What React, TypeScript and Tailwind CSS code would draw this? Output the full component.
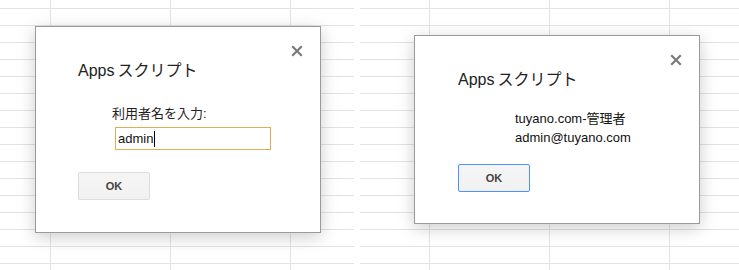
import React from "react";

const gridLeft =
  "bg-[linear-gradient(to_bottom,#e3e3e3_1px,transparent_1px),linear-gradient(to_right,#e3e3e3_1px,transparent_1px)] bg-[size:120px_17px,120px_17px] bg-[position:0px_8px,50px_0px]";
const gridRight =
  "bg-[linear-gradient(to_bottom,#e3e3e3_1px,transparent_1px),linear-gradient(to_right,#e3e3e3_1px,transparent_1px)] bg-[size:120px_17px,120px_17px] bg-[position:0px_8px,69px_0px]";

function CloseX() {
  return (
    <svg width="12" height="12" viewBox="0 0 12 12" className="block">
      <path d="M2 2 L10 10 M10 2 L2 10" stroke="#7a7a7a" strokeWidth="2.2" strokeLinecap="square" />
    </svg>
  );
}

function OkButton({ focused }: { focused?: boolean }) {
  return (
    <div
      className={
        "w-[72px] h-[28px] rounded-[2px] flex items-center justify-center text-[11px] font-bold text-[#444] bg-[linear-gradient(#f5f5f5,#f1f1f1)] border " +
        (focused ? "border-[#4d90fe]" : "border-[#dcdcdc]")
      }
    >
      OK
    </div>
  );
}

function Title() {
  return (
    <>
      Apps<span className="tracking-[-1.5px]"> </span>スクリプト
    </>
  );
}

export default function App() {
  const font = "font-['Liberation_Sans','Noto_Sans_CJK_JP',sans-serif]";
  return (
    <div className={"w-[739px] h-[270px] bg-white flex overflow-hidden " + font}>
      <div className={"relative w-[354px] h-[270px] shrink-0 " + gridLeft}>
        <div className="absolute left-[35px] top-[26px] w-[286px] h-[207px] bg-white border border-[#9a9a9a] shadow-[0_4px_16px_rgba(0,0,0,0.2)]">
          <div className="absolute right-[17px] top-[18px]">
            <CloseX />
          </div>
          <div className="pl-[42px] pt-[34px] text-[16px] leading-[20px] text-[#222]">
            <Title />
          </div>
          <div className="pl-[76px] pt-[25px] text-[13px] leading-[16px] text-[#222]">利用者名を入力:</div>
          <div className="pl-[79px] pt-[5px]">
            <div className="w-[156px] h-[23px] border border-[#dcae55] flex items-center pl-[2px] text-[13px] text-[#111]">
              admin<span className="inline-block w-[1px] h-[16px] bg-black ml-[1px]" />
            </div>
          </div>
          <div className="pl-[42px] pt-[22px]">
            <OkButton />
          </div>
        </div>
      </div>
      <div className="w-[6px] shrink-0" />
      <div className={"relative flex-1 h-[270px] " + gridRight}>
        <div className="absolute left-[54px] top-[35px] w-[286px] h-[189px] bg-white border border-[#9a9a9a] shadow-[0_4px_16px_rgba(0,0,0,0.2)]">
          <div className="absolute right-[17px] top-[18px]">
            <CloseX />
          </div>
          <div className="pl-[43px] pt-[34px] text-[16px] leading-[20px] text-[#222]">
            <Title />
          </div>
          <div className="pl-[100px] pt-[19px] text-[13px] leading-[19px] text-[#111]">
            <div>tuyano.com-管理者</div>
            <div>admin@tuyano.com</div>
          </div>
          <div className="pl-[43px] pt-[17px]">
            <OkButton focused />
          </div>
        </div>
      </div>
    </div>
  );
}
